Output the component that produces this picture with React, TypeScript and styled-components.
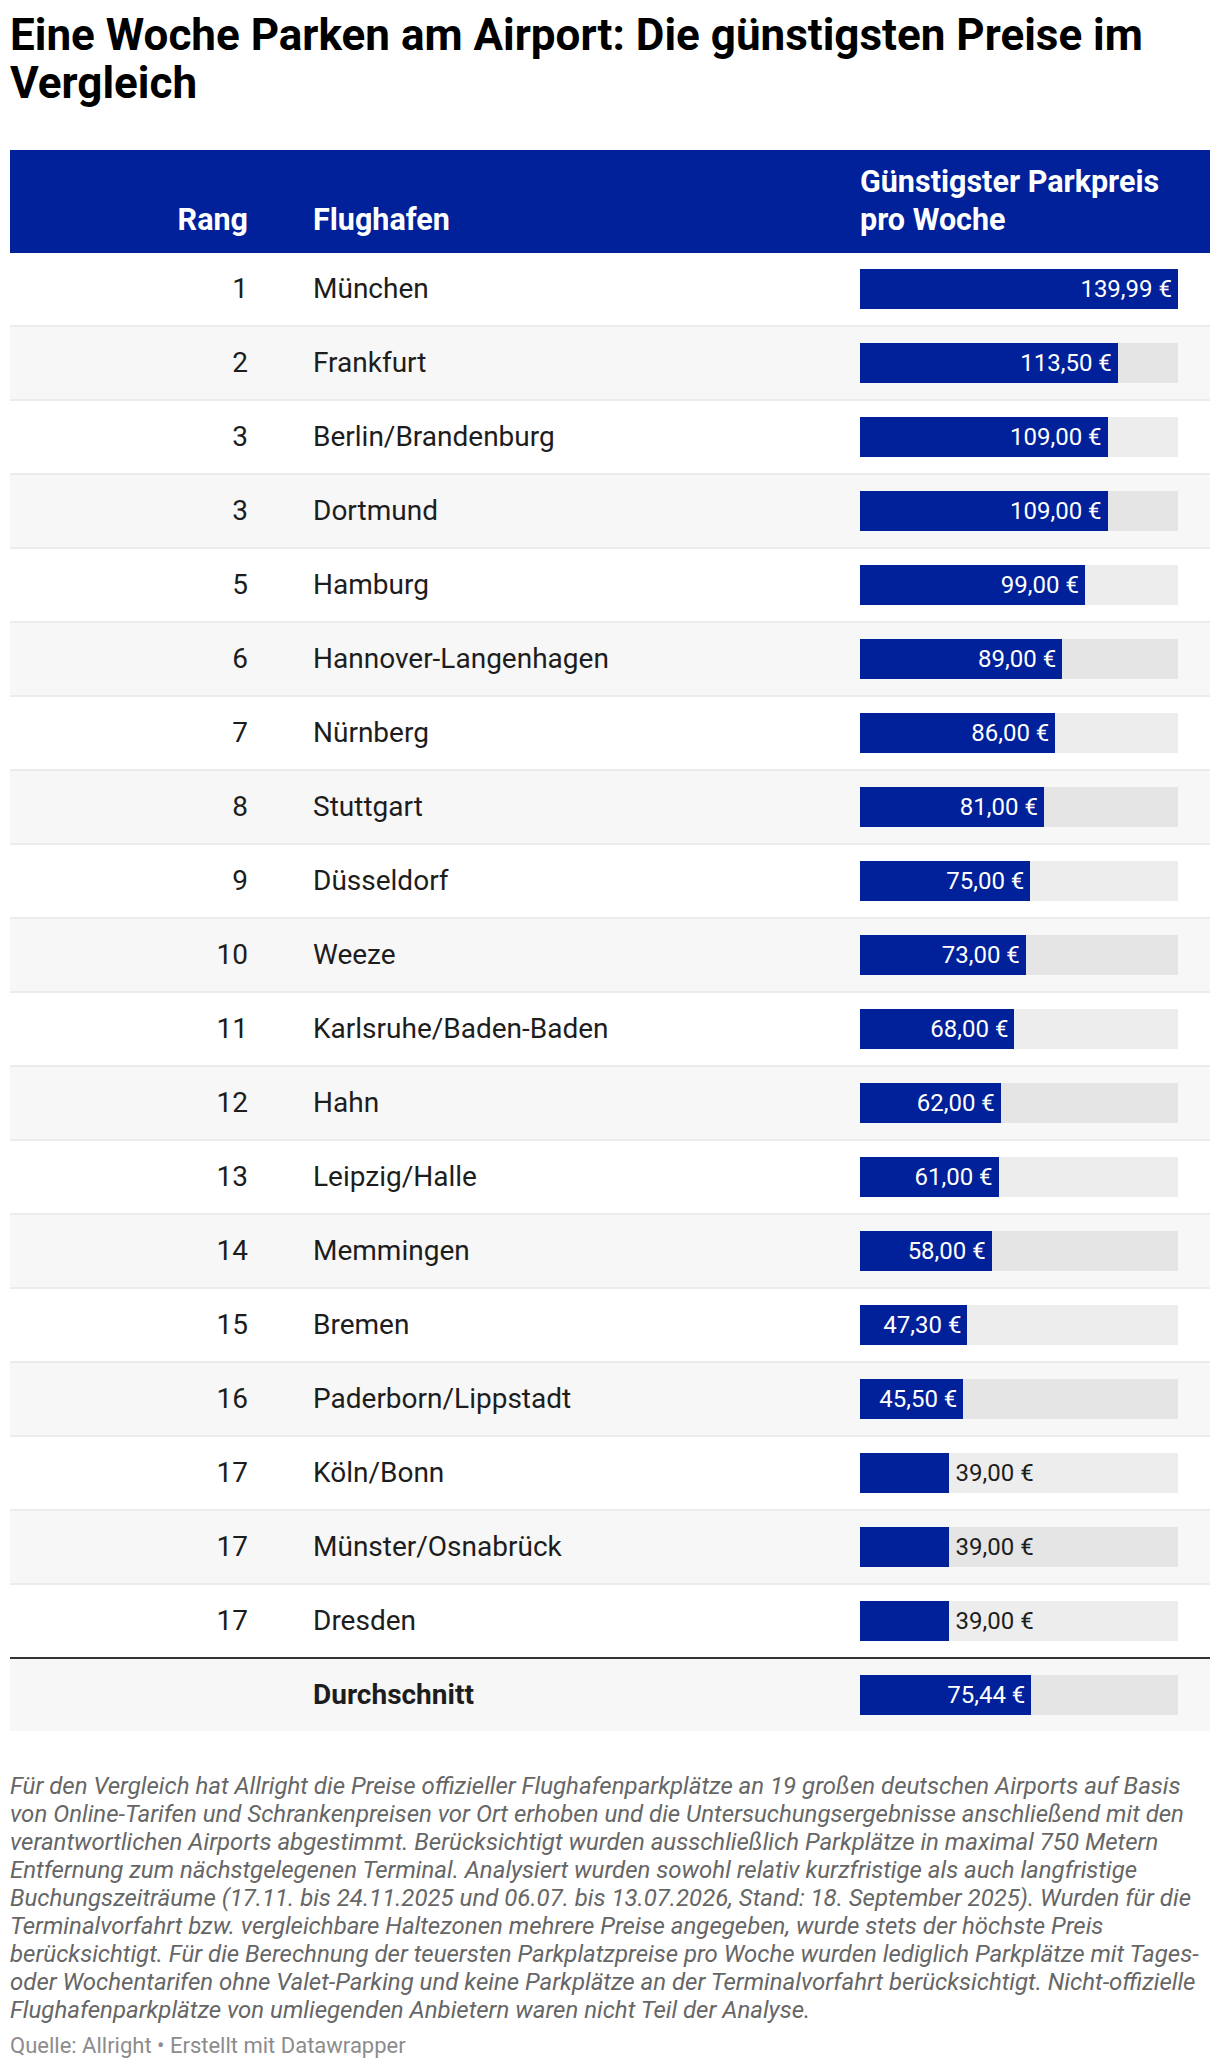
import React from 'react';
import styled, { createGlobalStyle } from 'styled-components';

const GlobalStyle = createGlobalStyle`
  html, body {
    margin: 0;
    padding: 0;
    background: #ffffff;
  }
  body {
    font-family: Roboto, "Liberation Sans", Arial, sans-serif;
    color: #1d1d1d;
  }
`;

const BRAND = '#002199';
const MAX_PRICE = 139.99;

const Page = styled.div`
  width: 1200px;
  padding: 11px 10px 0;
`;

const Title = styled.h1`
  margin: 0 0 43px;
  font-size: 44px;
  line-height: 48px;
  font-weight: 700;
  color: #000;
`;

const Table = styled.div`
  display: flex;
  flex-direction: column;
`;

const HeaderRow = styled.div`
  display: grid;
  grid-template-columns: 238px 612px 350px;
  background: ${BRAND};
  color: #fff;
  align-items: end;
`;

const HeadCell = styled.div<{ $align?: 'left' | 'right'; $pad?: number }>`
  font-size: 30.5px;
  line-height: 38px;
  font-weight: 700;
  padding: 13px 0 14px ${p => p.$pad ?? 0}px;
  text-align: ${p => p.$align ?? 'left'};
`;

const PriceHead = styled(HeadCell)`
  padding-right: 20px;
`;

const Row = styled.div<{ $striped: boolean; $last?: boolean }>`
  display: grid;
  grid-template-columns: 238px 612px 350px;
  align-items: center;
  height: 72px;
  background: ${p => (p.$striped ? '#f7f7f7' : '#ffffff')};
  border-bottom: 2px solid ${p => (p.$last ? '#333333' : '#ebebeb')};
`;

const AverageRow = styled(Row)`
  border-bottom: none;
`;

const Cell = styled.div<{ $align?: 'left' | 'right'; $pad?: number; $bold?: boolean }>`
  font-size: 28px;
  line-height: 40px;
  font-weight: ${p => (p.$bold ? 700 : 400)};
  padding-left: ${p => p.$pad ?? 0}px;
  text-align: ${p => p.$align ?? 'left'};
  color: #1d1d1d;
  white-space: nowrap;
`;

const BarCell = styled.div`
  padding-right: 32px;
`;

const Track = styled.div`
  display: flex;
  align-items: center;
  height: 40px;
  background: rgba(0, 0, 0, 0.07);
`;

const Bar = styled.div`
  height: 100%;
  background: ${BRAND};
  display: flex;
  align-items: center;
  justify-content: flex-end;
  flex: none;
`;

const BarLabel = styled.span<{ $inside: boolean }>`
  font-size: 24px;
  line-height: 40px;
  white-space: nowrap;
  color: ${p => (p.$inside ? '#ffffff' : '#1d1d1d')};
  padding: ${p => (p.$inside ? '0 6px 0 0' : '0 0 0 7px')};
`;

const Notes = styled.p`
  margin: 41px 0 0;
  font-size: 24px;
  line-height: 28px;
  font-style: italic;
  color: #666666;
`;

const Source = styled.div`
  margin-top: 8px;
  font-size: 22px;
  line-height: 28px;
  color: #8c8c8c;
`;

type Entry = { rank: number; name: string; price: number };

const entries: Entry[] = [
  { rank: 1, name: 'München', price: 139.99 },
  { rank: 2, name: 'Frankfurt', price: 113.5 },
  { rank: 3, name: 'Berlin/Brandenburg', price: 109 },
  { rank: 3, name: 'Dortmund', price: 109 },
  { rank: 5, name: 'Hamburg', price: 99 },
  { rank: 6, name: 'Hannover-Langenhagen', price: 89 },
  { rank: 7, name: 'Nürnberg', price: 86 },
  { rank: 8, name: 'Stuttgart', price: 81 },
  { rank: 9, name: 'Düsseldorf', price: 75 },
  { rank: 10, name: 'Weeze', price: 73 },
  { rank: 11, name: 'Karlsruhe/Baden-Baden', price: 68 },
  { rank: 12, name: 'Hahn', price: 62 },
  { rank: 13, name: 'Leipzig/Halle', price: 61 },
  { rank: 14, name: 'Memmingen', price: 58 },
  { rank: 15, name: 'Bremen', price: 47.3 },
  { rank: 16, name: 'Paderborn/Lippstadt', price: 45.5 },
  { rank: 17, name: 'Köln/Bonn', price: 39 },
  { rank: 17, name: 'Münster/Osnabrück', price: 39 },
  { rank: 17, name: 'Dresden', price: 39 },
];

const formatPrice = (v: number) => v.toFixed(2).replace('.', ',') + ' €';

const PriceBar: React.FC<{ value: number }> = ({ value }) => {
  // label sits in the bar unless the bar is too short for it
  const inside = value >= 45;
  const pct = (value / MAX_PRICE) * 100;
  return (
    <BarCell>
      <Track>
        <Bar style={{ width: `${pct}%` }}>
          {inside && <BarLabel $inside>{formatPrice(value)}</BarLabel>}
        </Bar>
        {!inside && <BarLabel $inside={false}>{formatPrice(value)}</BarLabel>}
      </Track>
    </BarCell>
  );
};

const App: React.FC = () => {
  const average = 75.44;

  return (
    <Page>
      <GlobalStyle />
      <Title>Eine Woche Parken am Airport: Die günstigsten Preise im Vergleich</Title>

      <Table>
        <HeaderRow>
          <HeadCell $align="right">Rang</HeadCell>
          <HeadCell $pad={65}>Flughafen</HeadCell>
          <PriceHead>Günstigster Parkpreis pro Woche</PriceHead>
        </HeaderRow>

        {entries.map((e, idx) => (
          <Row key={e.name} $striped={idx % 2 === 1} $last={idx === entries.length - 1}>
            <Cell $align="right">{e.rank}</Cell>
            <Cell $pad={65}>{e.name}</Cell>
            <PriceBar value={e.price} />
          </Row>
        ))}

        <AverageRow $striped>
          <Cell $align="right" />
          <Cell $pad={65} $bold>
            Durchschnitt
          </Cell>
          <PriceBar value={average} />
        </AverageRow>
      </Table>

      <Notes>
        Für den Vergleich hat Allright die Preise offizieller Flughafenparkplätze an 19 großen deutschen
        Airports auf Basis von Online-Tarifen und Schrankenpreisen vor Ort erhoben und die
        Untersuchungsergebnisse anschließend mit den verantwortlichen Airports abgestimmt. Berücksichtigt
        wurden ausschließlich Parkplätze in maximal 750 Metern Entfernung zum nächstgelegenen Terminal.
        Analysiert wurden sowohl relativ kurzfristige als auch langfristige Buchungszeiträume (17.11. bis
        24.11.2025 und 06.07. bis 13.07.2026, Stand: 18. September 2025). Wurden für die Terminalvorfahrt
        bzw. vergleichbare Haltezonen mehrere Preise angegeben, wurde stets der höchste Preis
        berücksichtigt. Für die Berechnung der teuersten Parkplatzpreise pro Woche wurden lediglich
        Parkplätze mit Tages- oder Wochentarifen ohne Valet-Parking und keine Parkplätze an der
        Terminalvorfahrt berücksichtigt. Nicht-offizielle Flughafenparkplätze von umliegenden Anbietern
        waren nicht Teil der Analyse.
      </Notes>
      <Source>Quelle: Allright • Erstellt mit Datawrapper</Source>
    </Page>
  );
};

export default App;
